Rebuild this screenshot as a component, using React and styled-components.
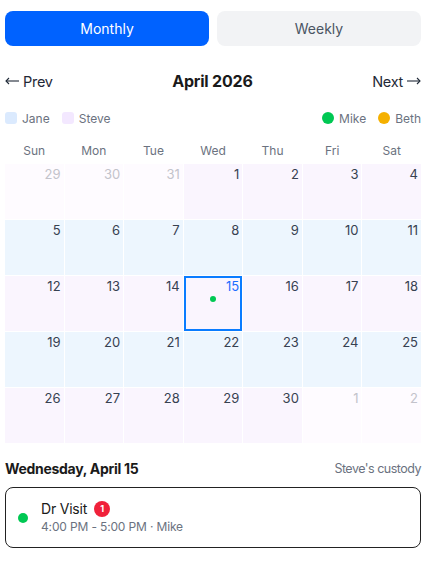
import React from "react";
import styled, { createGlobalStyle } from "styled-components";

const Global = createGlobalStyle`
  html, body { margin: 0; padding: 0; background: #fff; }
  body { font-family: Inter, "Noto Sans", sans-serif; color: #1f2937; }
`;

const Page = styled.div`
  width: 416px;
  padding: 11px 0 0 5px;
  display: flex;
  flex-direction: column;
`;

const Toggle = styled.div`
  display: grid;
  grid-template-columns: 1fr 1fr;
  gap: 8px;
`;

const ToggleButton = styled.button`
  height: 35px;
  border: none;
  border-radius: 8px;
  font-family: inherit;
  font-size: 14px;
  background: ${(p) => (p.$active ? "#0062ff" : "#f2f3f5")};
  color: ${(p) => (p.$active ? "#ffffff" : "#4b5563")};
  padding: 0;
`;

const Nav = styled.div`
  display: flex;
  justify-content: space-between;
  align-items: center;
  margin-top: 24px;
  height: 22px;
  position: relative;
`;

const NavLink = styled.span`
  display: inline-flex;
  align-items: center;
  gap: 4px;
  font-size: 14.5px;
  letter-spacing: -0.3px;
  color: #1f2937;
`;

const MonthTitle = styled.h2`
  margin: 0;
  font-size: 16px;
  letter-spacing: -0.2px;
  font-weight: 700;
  color: #1a1a1a;
`;

const Legend = styled.div`
  display: flex;
  justify-content: space-between;
  align-items: center;
  margin-top: 18px;
  height: 16px;
`;

const LegendGroup = styled.div`
  display: flex;
  align-items: center;
  gap: 12px;
`;

const LegendItem = styled.span`
  display: flex;
  align-items: center;
  gap: 5px;
  font-size: 12px;
  color: #6b7280;
`;

const Swatch = styled.span`
  width: 12px;
  height: 12px;
  border-radius: ${(p) => (p.$round ? "50%" : "3px")};
  background: ${(p) => p.$color};
`;

const Weekdays = styled.div`
  display: grid;
  grid-template-columns: repeat(7, 1fr);
  gap: 1px;
  margin-top: 10px;
  height: 28px;
  align-items: center;
`;

const Weekday = styled.span`
  text-align: center;
  font-size: 12px;
  color: #6b7280;
`;

const Grid = styled.div`
  display: grid;
  grid-template-columns: repeat(7, 1fr);
  grid-auto-rows: 55px;
  gap: 1px;
`;

const Cell = styled.div`
  box-sizing: border-box;
  background: ${(p) => p.$bg};
  box-shadow: ${(p) => (p.$selected ? "inset 0 0 0 2px #0a7cff" : "none")};
  padding: 2px 3px;
  text-align: right;
  font-size: 13px;
  line-height: 16px;
  color: ${(p) => (p.$selected ? "#1a6dff" : p.$muted ? "#c3c3cb" : "#374151")};
`;

const Dot = styled.span`
  display: block;
  width: 6px;
  height: 6px;
  margin: 2px auto 0;
  border-radius: 50%;
  background: #00c853;
`;

const DayHeader = styled.div`
  display: flex;
  justify-content: space-between;
  align-items: center;
  margin-top: 15px;
  height: 20px;
`;

const DayTitle = styled.h3`
  margin: 0;
  font-size: 14px;
  letter-spacing: -0.3px;
  font-weight: 700;
  color: #1a1a1a;
`;

const Custody = styled.span`
  font-size: 12.5px;
  letter-spacing: -0.5px;
  color: #6b7280;
`;

const EventCard = styled.div`
  margin-top: 9px;
  box-sizing: border-box;
  height: 61px;
  border: 1px solid #222;
  border-radius: 8px;
  display: flex;
  align-items: center;
  padding: 0 12px;
  gap: 13px;
`;

const EventDot = styled.span`
  width: 10px;
  height: 10px;
  border-radius: 50%;
  background: #00c853;
  flex-shrink: 0;
`;

const EventBody = styled.div`
  display: flex;
  flex-direction: column;
  gap: 1px;
`;

const EventTitle = styled.div`
  display: flex;
  align-items: center;
  gap: 7px;
  font-size: 14px;
  letter-spacing: -0.2px;
  line-height: 18px;
  color: #1a1a1a;
`;

const Badge = styled.span`
  width: 16px;
  height: 16px;
  border-radius: 50%;
  background: #f0213a;
  color: #fff;
  font-size: 9px;
  font-weight: 700;
  letter-spacing: 0;
  display: inline-flex;
  align-items: center;
  justify-content: center;
`;

const EventMeta = styled.span`
  font-size: 12px;
  letter-spacing: -0.15px;
  line-height: 16px;
  color: #6b7280;
`;

const Arrow = ({ dir }) => (
  <svg width="14" height="8" viewBox="0 0 14 8" fill="none" stroke="#1f2937" strokeWidth="1.1">
    {dir === "left" ? (
      <>
        <path d="M1 4H14" />
        <path d="M4 1L1 4L4 7" />
      </>
    ) : (
      <>
        <path d="M0 4H13" />
        <path d="M10 1L13 4L10 7" />
      </>
    )}
  </svg>
);

const JANE = "#edf6fe";
const STEVE = "#faf5fe";
const OUT = "#fefbff";

const weeks = [
  { bg: STEVE, days: [[29, 1], [30, 1], [31, 1], [1], [2], [3], [4]] },
  { bg: JANE, days: [[5], [6], [7], [8], [9], [10], [11]] },
  { bg: STEVE, days: [[12], [13], [14], [15], [16], [17], [18]] },
  { bg: JANE, days: [[19], [20], [21], [22], [23], [24], [25]] },
  { bg: STEVE, days: [[26], [27], [28], [29], [30], [1, 1], [2, 1]] },
];

export default function App() {
  return (
    <>
      <Global />
      <Page>
        <Toggle>
          <ToggleButton $active>Monthly</ToggleButton>
          <ToggleButton>Weekly</ToggleButton>
        </Toggle>
        <Nav>
          <NavLink><Arrow dir="left" />Prev</NavLink>
          <MonthTitle>April 2026</MonthTitle>
          <NavLink>Next<Arrow dir="right" /></NavLink>
        </Nav>
        <Legend>
          <LegendGroup>
            <LegendItem><Swatch $color="#dbeafe" />Jane</LegendItem>
            <LegendItem><Swatch $color="#f3e8ff" />Steve</LegendItem>
          </LegendGroup>
          <LegendGroup>
            <LegendItem><Swatch $round $color="#00c853" />Mike</LegendItem>
            <LegendItem><Swatch $round $color="#f5b000" />Beth</LegendItem>
          </LegendGroup>
        </Legend>
        <Weekdays>
          {["Sun", "Mon", "Tue", "Wed", "Thu", "Fri", "Sat"].map((d) => (
            <Weekday key={d}>{d}</Weekday>
          ))}
        </Weekdays>
        <Grid>
          {weeks.map((w, wi) =>
            w.days.map(([n, muted], di) => {
              const selected = wi === 2 && n === 15;
              return (
                <Cell
                  key={`${wi}-${di}`}
                  $bg={muted ? OUT : w.bg}
                  $muted={!!muted}
                  $selected={selected}
                >
                  {n}
                  {selected && <Dot />}
                </Cell>
              );
            })
          )}
        </Grid>
        <DayHeader>
          <DayTitle>Wednesday, April 15</DayTitle>
          <Custody>Steve's custody</Custody>
        </DayHeader>
        <EventCard>
          <EventDot />
          <EventBody>
            <EventTitle>
              Dr Visit <Badge>1</Badge>
            </EventTitle>
            <EventMeta>4:00 PM - 5:00 PM · Mike</EventMeta>
          </EventBody>
        </EventCard>
      </Page>
    </>
  );
}
